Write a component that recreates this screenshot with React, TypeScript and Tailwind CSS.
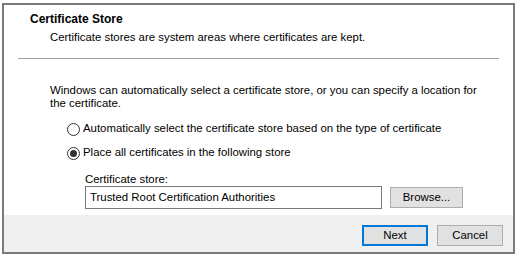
import { useState } from 'react'

type Choice = 'auto' | 'manual'

function Radio({ checked, label, onSelect }: { checked: boolean; label: string; onSelect: () => void }) {
  return (
    <div className="flex items-center h-[16px] cursor-default" onClick={onSelect}>
      <span className="w-[13px] h-[13px] rounded-full border border-[#333333] bg-white flex items-center justify-center shrink-0">
        {checked && <span className="w-[7px] h-[7px] rounded-full bg-[#333333]" />}
      </span>
      <span className="ml-[3px]">{label}</span>
    </div>
  )
}

export default function App() {
  const [choice, setChoice] = useState<Choice>('manual')
  const [store] = useState('Trusted Root Certification Authorities')

  return (
    <div className="w-[520px] h-[261px] bg-white pt-[3px] pl-[2px] font-['Liberation_Sans',Arial,sans-serif] text-[11.4px] text-black">
      <div className="w-[513px] h-[251px] border-2 border-[#7a7a7a] flex flex-col">

        {/* Header */}
        <div className="pl-[26px] pt-[6px] h-[16px] leading-[16px] font-bold text-[12px]">Certificate Store</div>
        <div className="pl-[46px] mt-[8px] leading-[16px]">Certificate stores are system areas where certificates are kept.</div>
        <div className="mx-[14px] mt-[13px] h-px bg-[#a0a0a0]" />

        {/* Body */}
        <div className="flex-1 pl-[46px] pr-[18px] pt-[25px]">
          <p className="leading-[13px]">
            Windows can automatically select a certificate store, or you can specify a location for the certificate.
          </p>
          <div className="pl-[17px] mt-[11px] flex flex-col gap-[8px]">
            <Radio
              checked={choice === 'auto'}
              label="Automatically select the certificate store based on the type of certificate"
              onSelect={() => setChoice('auto')}
            />
            <Radio
              checked={choice === 'manual'}
              label="Place all certificates in the following store"
              onSelect={() => setChoice('manual')}
            />
          </div>
          <div className="pl-[35px] mt-[11px]">
            <div className="leading-[14px]">Certificate store:</div>
            <div className="flex items-center mt-0 gap-[8px]">
              <div className="w-[297px] h-[23px] border border-[#7a7a7a] px-[4px] flex items-center">{store}</div>
              <button className="w-[73px] h-[21px] border border-[#adadad] bg-[#e1e1e1]">Browse...</button>
            </div>
          </div>
        </div>

        {/* Footer */}
        <div className="h-[37px] bg-[#f0f0f0] flex items-start justify-end gap-[9px] pr-[10px] pt-[10px]">
          <button className="w-[66px] h-[21px] border-2 border-[#0078d7] bg-[#e1e1e1]">Next</button>
          <button className="w-[66px] h-[21px] border border-[#adadad] bg-[#e1e1e1]">Cancel</button>
        </div>
      </div>
    </div>
  )
}
